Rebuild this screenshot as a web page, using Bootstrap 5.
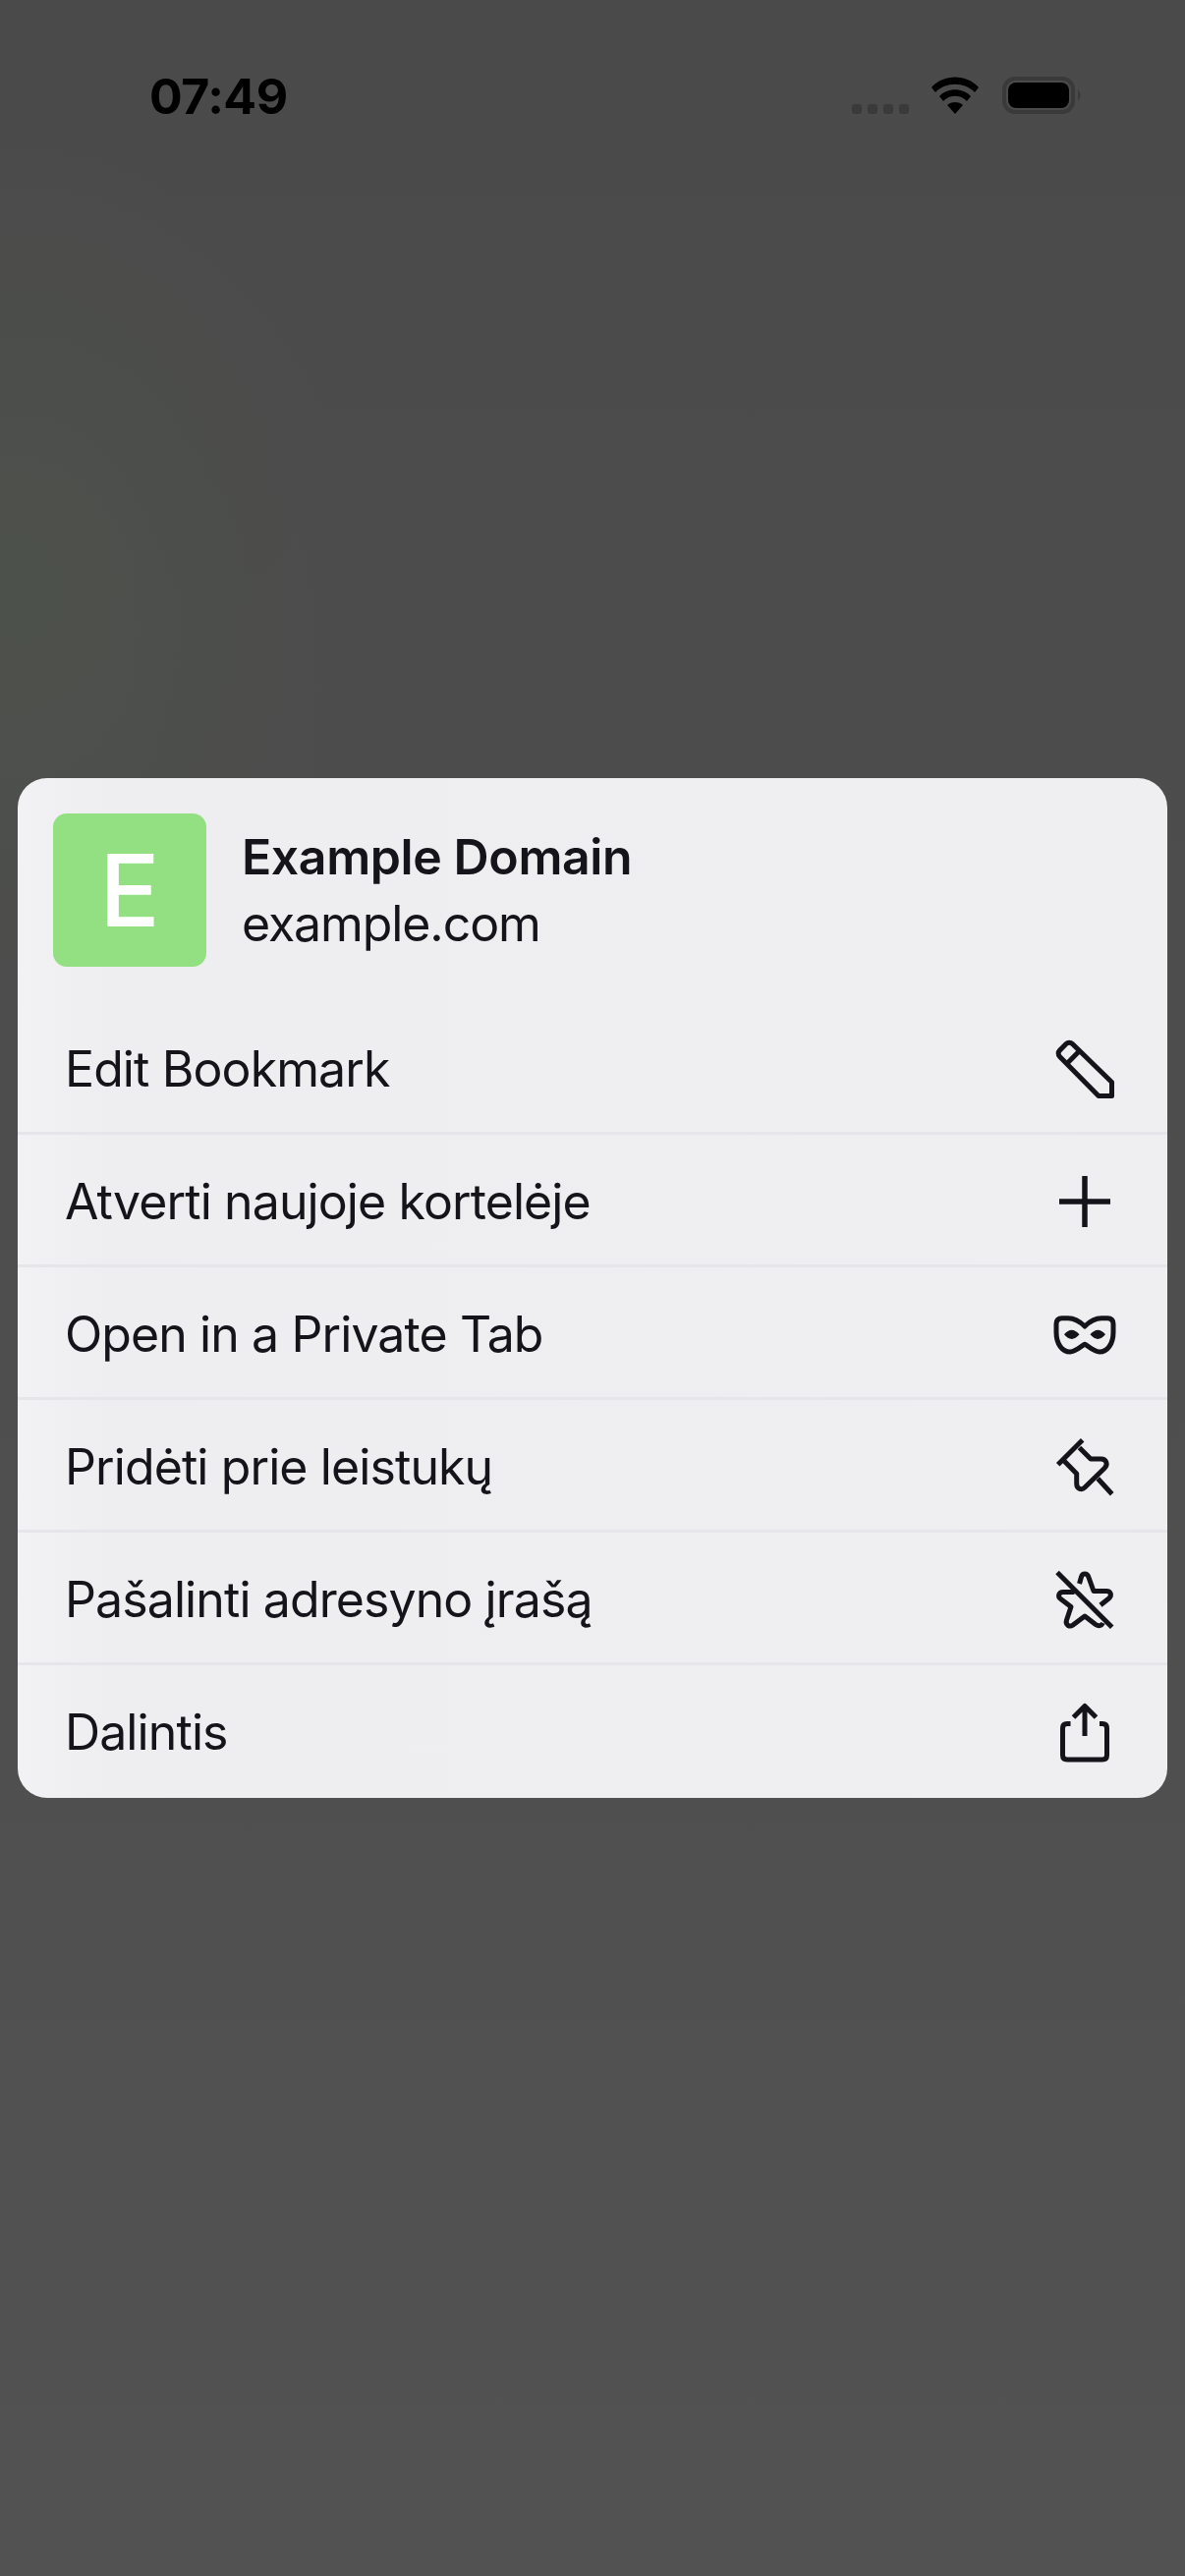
<!DOCTYPE html>
<html lang="lt">
<head>
    <meta charset="UTF-8">
    <meta name="viewport" content="width=device-width, initial-scale=1.0">
    <title>Example Domain</title>
    <link href="https://cdn.jsdelivr.net/npm/bootstrap@5.3.2/dist/css/bootstrap.min.css" rel="stylesheet">
    <style>
        html, body { height: 2622px; }
        body {
            font-family: Inter, "Liberation Sans", sans-serif;
            overflow: hidden;
            background:
                radial-gradient(ellipse 340px 460px at 20px 600px, rgba(84, 110, 70, .16), transparent),
                linear-gradient(180deg, #4a4a4a 0%, #4d4d4d 40%, #525252 100%);
        }
        .status-strip { height: 140px; padding: 72px 104px 0 152px; }
        .clock { font-size: 50px; font-weight: 700; line-height: 52px; color: #000; letter-spacing: -.5px; }
        .status-icons { margin-top: 6px; }
        .dots { gap: 6px; margin: 28px 22px 0 0; }
        .dots i { width: 10px; height: 10px; border-radius: 3px; background: #3a3a3a; display: block; }
        .wifi { width: 50px; height: 38px; margin-right: 23px; }
        .batt { width: 82px; height: 38px; }
        .sheet {
            margin: 652px 18px 0 18px;
            height: 1038px;
            background: linear-gradient(90deg, #f2f2f4 0, #eeeef0 90px, #efeff1 100%);
            border: 0;
            border-radius: 30px;
            overflow: hidden;
        }
        .sheet-head { height: 228px; padding: 36px 36px 0; gap: 36px; }
        .fav {
            width: 156px; height: 156px; border-radius: 14px; background: #92e082;
            color: #fff; font-size: 102px; font-weight: 500; line-height: 1;
        }
        .site-text { padding-top: 14px; }
        .site-title { font-size: 50px; font-weight: 600; line-height: 60px; color: #15141a; letter-spacing: -.4px; }
        .site-url { font-size: 50px; line-height: 60px; color: #15141a; letter-spacing: -1.1px; margin-top: 8px; }
        .menu-rows { --bs-list-group-bg: transparent; --bs-list-group-border-color: #e5e5ea; --bs-list-group-border-width: 3px; }
        .menu-row {
            height: 135px;
            padding: 4px 48px 0 48px;
            font-size: 50px;
            color: #15141a;
            letter-spacing: -.9px;
        }
        .menu-row:last-child { padding-top: 2px; }
        .menu-row svg { width: 72px; height: 72px; fill: none; stroke: #15141a; stroke-width: 5; stroke-linejoin: round; }
    </style>
</head>
<body>
    <div class="status-strip d-flex justify-content-between align-items-start">
        <div class="clock">07:49</div>
        <div class="status-icons d-flex align-items-start">
            <div class="dots d-flex"><i></i><i></i><i></i><i></i></div>
            <svg class="wifi" viewBox="0 0 50 38">
                <path d="M1 11C13-3 37-3 49 11L45 16C35 5 15 5 5 16Z"/>
                <path d="M9 20C17 11 33 11 41 20L37 25C31 18 19 18 13 25Z"/>
                <path d="M17 29C21 25 29 25 33 29L25 38Z"/>
            </svg>
            <svg class="batt" viewBox="0 0 82 38">
                <rect x="2" y="2" width="70" height="34" rx="11" fill="none" stroke="#3a3a3a" stroke-width="4"/>
                <rect x="6" y="6" width="62" height="26" rx="8" fill="#000"/>
                <path d="M77 13Q82 19 77 25Z" fill="#3a3a3a"/>
            </svg>
        </div>
    </div>

    <div class="card sheet">
        <div class="sheet-head d-flex align-items-start">
            <div class="fav d-flex align-items-center justify-content-center flex-shrink-0">E</div>
            <div class="site-text">
                <div class="site-title">Example Domain</div>
                <div class="site-url">example.com</div>
            </div>
        </div>
        <div class="list-group list-group-flush menu-rows">
            <div class="list-group-item menu-row d-flex justify-content-between align-items-center">
                <span>Edit Bookmark</span>
                <svg viewBox="0 0 72 72"><path d="M17 10.5a4.5 4.5 0 0 1 6.4 0L63.5 49.5V63.5H50L10.5 23.5a4.5 4.5 0 0 1 0-6.4zM18.7 29.7L32 16.3"/></svg>
            </div>
            <div class="list-group-item menu-row d-flex justify-content-between align-items-center">
                <span>Atverti naujoje kortelėje</span>
                <svg viewBox="0 0 72 72"><path d="M36 10V62M10 36H62" stroke-width="5.5"/></svg>
            </div>
            <div class="list-group-item menu-row d-flex justify-content-between align-items-center">
                <span>Open in a Private Tab</span>
                <svg viewBox="0 0 72 72">
                    <path d="M36 28C31 23 26 19.7 19 19.7H13Q7 19.7 7 25.7V34C7 46 13 54 21 54C27 54 31 49 36 46.3C41 49 45 54 51 54C59 54 65 46 65 34V25.7Q65 19.7 59 19.7H53C46 19.7 41 23 36 28Z"/>
                    <path d="M15 36.3Q22.7 27 30.5 36.3Q22.7 45.5 15 36.3ZM41.5 36.3Q49.3 27 57 36.3Q49.3 45.5 41.5 36.3Z" fill="#15141a" stroke="none"/>
                </svg>
            </div>
            <div class="list-group-item menu-row d-flex justify-content-between align-items-center">
                <span>Pridėti prie leistukų</span>
                <svg viewBox="0 0 72 72"><path d="M8.7 33.7L33.7 8.7M49.3 48L63.7 63.7M15.5 30.5L27.7 43V53C27.7 59 33 60 36 57L56 37.5C60 33.5 58 28 52.5 28H42L30.5 16.5"/></svg>
            </div>
            <div class="list-group-item menu-row d-flex justify-content-between align-items-center">
                <span>Pašalinti adresyno įrašą</span>
                <svg viewBox="0 0 72 72"><path d="M8 8.5L63.7 64.2M30.5 20L32.5 13C33.5 9 38.5 9 39.8 13L45 27.5H58C62.5 27.5 64 32 60.5 35L52 41.8M25.5 28.5H14C9.5 28.5 8 33 11.5 35.5L22 43.5L17.5 57C16 62 20.5 64.5 24 62L36 53L47 61.5C50 63.5 53 63 54.5 60"/></svg>
            </div>
            <div class="list-group-item menu-row d-flex justify-content-between align-items-center">
                <span>Dalintis</span>
                <svg viewBox="0 0 72 72"><path d="M21.5 26.5H18Q13.5 26.5 13.5 31V58.5Q13.5 63 18 63H54Q58.5 63 58.5 58.5V31Q58.5 26.5 54 26.5H51M36 39V10M24.5 20L36 8.5L47.5 20"/></svg>
            </div>
        </div>
    </div>
    <script src="https://cdn.jsdelivr.net/npm/bootstrap@5.3.2/dist/js/bootstrap.bundle.min.js"></script>
</body>
</html>
